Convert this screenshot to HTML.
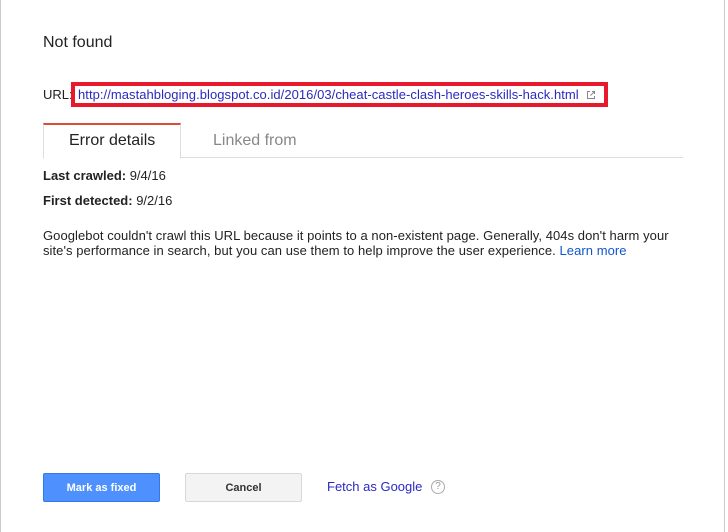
<!DOCTYPE html>
<html><head><style>
body{margin:0;width:728px;height:532px;background:#fff;position:relative;font-family:"Liberation Sans",Arial,sans-serif;color:#222;overflow:hidden}
.a{position:absolute}
</style></head><body>
<div class="a" style="left:0;top:0;width:1px;height:532px;background:#ccc"></div>
<div class="a" style="left:724px;top:0;width:1px;height:532px;background:#ccc"></div>
<div class="a" style="left:43px;top:34px;font-size:16px">Not found</div>
<div class="a" style="left:43px;top:87px;font-size:13px">URL:</div>
<div class="a" style="left:71px;top:82px;width:529px;height:17px;border:4px solid #e8192c;background:#fff"></div>
<div class="a" style="left:78px;top:87px;font-size:13px;color:#2a2ac0;letter-spacing:0.05px">http://mastahbloging.blogspot.co.id/2016/03/cheat-castle-clash-heroes-skills-hack.html</div>
<svg class="a" style="left:585px;top:89px" width="12" height="12" viewBox="0 0 12 12" fill="none" stroke="#888" stroke-width="1"><path d="M5 2.5H2.5v7h7V7M7 2.5h2.5V5M9.5 2.5L5.5 6.5"/></svg>
<div class="a" style="left:43px;top:157px;width:640px;height:1px;background:#ddd"></div>
<div class="a" style="left:43px;top:123px;width:136px;height:33px;border:1px solid #ddd;border-top:2px solid #dd4b39;border-bottom:1px solid #fff;background:#fff"></div>
<div class="a" style="left:69px;top:132px;font-size:16px;color:#222">Error details</div>
<div class="a" style="left:213px;top:132px;font-size:16px;color:#888">Linked from</div>
<div class="a" style="left:43px;top:168px;font-size:13px"><b>Last crawled:</b> 9/4/16</div>
<div class="a" style="left:43px;top:193px;font-size:13px"><b>First detected:</b> 9/2/16</div>
<div class="a" style="left:43px;top:228px;font-size:13px;line-height:15px;width:650px;letter-spacing:0.06px">Googlebot couldn't crawl this URL because it points to a non-existent page. Generally, 404s don't harm your site's performance in search, but you can use them to help improve the user experience. <span style="color:#1155cc">Learn more</span></div>
<div class="a" style="left:43px;top:473px;width:115px;height:27px;background:#4d90fe;border:1px solid #3079ed;border-radius:2px;color:#fff;font-size:11px;font-weight:bold;text-align:center;line-height:28px">Mark as fixed</div>
<div class="a" style="left:185px;top:473px;width:115px;height:27px;background:#f3f3f3;border:1px solid #d8d8d8;border-radius:2px;color:#333;font-size:11px;font-weight:bold;text-align:center;line-height:28px">Cancel</div>
<div class="a" style="left:327px;top:479px;font-size:13px;color:#2a2ac0">Fetch as Google</div>
<div class="a" style="left:431px;top:480px;width:12px;height:12px;border:1px solid #aaa;border-radius:50%;font-size:10px;color:#999;text-align:center;line-height:12px">?</div>
</body></html>
